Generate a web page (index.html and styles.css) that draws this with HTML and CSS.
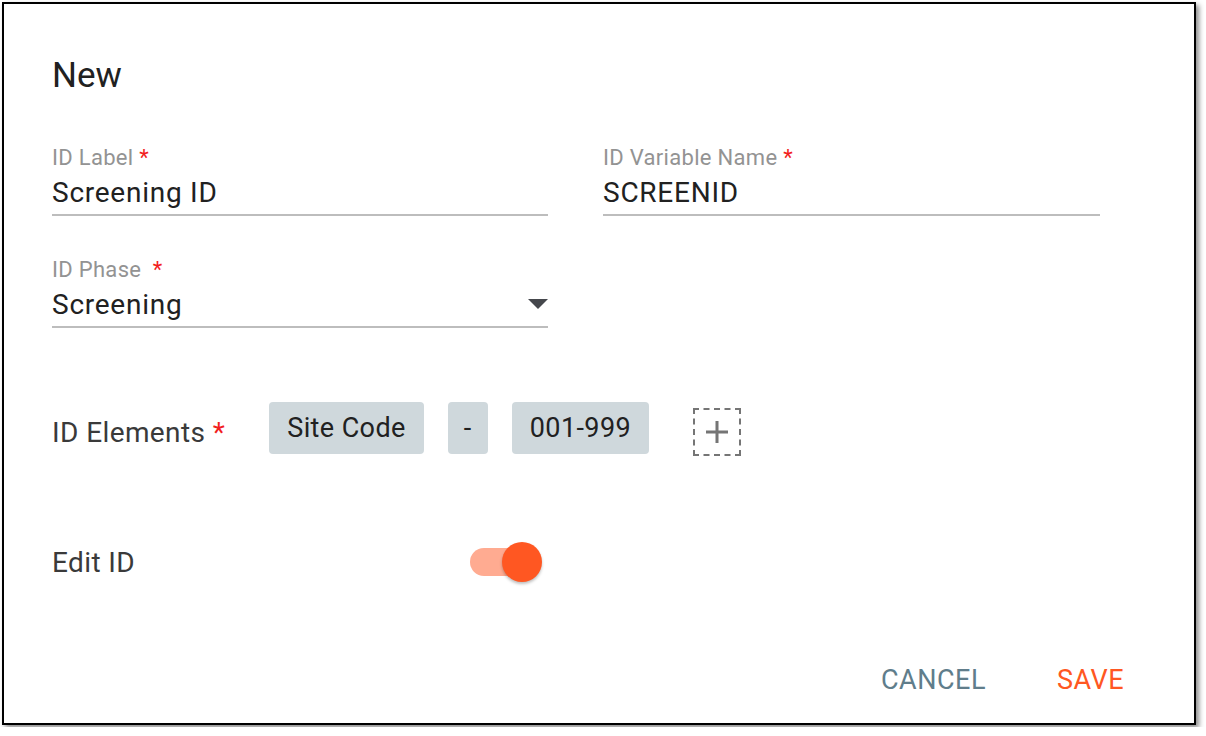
FILE: index.html
```html
<!DOCTYPE html>
<html lang="en">
<head>
    <meta charset="UTF-8">
    <meta name="viewport" content="width=device-width, initial-scale=1.0">
    <title>New ID</title>
    <link rel="stylesheet" href="styles.css">
</head>
<body>
    <div class="dialog">
        <h1 class="dialog-title">New</h1>

        <div class="fields">
            <div class="field">
                <label class="field-label">ID Label <span class="req">*</span></label>
                <div class="field-input">Screening ID</div>
            </div>
            <div class="field">
                <label class="field-label">ID Variable Name <span class="req">*</span></label>
                <div class="field-input">SCREENID</div>
            </div>
            <div class="field field-select">
                <label class="field-label">ID Phase &nbsp;<span class="req">*</span></label>
                <div class="field-input">
                    <span>Screening</span>
                    <svg class="select-arrow" width="20" height="10" viewBox="0 0 20 10">
                        <path d="M0 0 L20 0 L10 10 Z" fill="#45474c"/>
                    </svg>
                </div>
            </div>
        </div>

        <div class="elements-row">
            <div class="row-label">ID Elements <span class="req">*</span></div>
            <div class="chips">
                <span class="chip">Site Code</span>
                <span class="chip chip-narrow">-</span>
                <span class="chip">001-999</span>
                <button class="add-chip" type="button">
                    <svg width="24" height="24" viewBox="0 0 24 24">
                        <path d="M12 1 V23 M1 12 H23" stroke="#757575" stroke-width="3"/>
                    </svg>
                </button>
            </div>
        </div>

        <div class="toggle-row">
            <div class="row-label toggle-label">Edit ID</div>
            <div class="switch on">
                <span class="switch-track"></span>
                <span class="switch-thumb"></span>
            </div>
        </div>

        <div class="actions">
            <button class="btn btn-cancel" type="button">CANCEL</button>
            <button class="btn btn-save" type="button">SAVE</button>
        </div>
    </div>
</body>
</html>
```

FILE: styles.css
```css
body {
    margin: 0;
    background: #fff;
    font-family: Roboto, "Liberation Sans", Arial, sans-serif;
}

.dialog {
    box-sizing: border-box;
    width: 1194px;
    height: 723px;
    margin: 2px;
    padding: 0 70px 0 48px;
    border: 2px solid #000;
    background: #fff;
    box-shadow: 3px 3px 5px rgba(0, 0, 0, 0.45);
    overflow: hidden;
}

.dialog-title {
    margin: 52px 0 0;
    font-size: 35px;
    font-weight: 400;
    line-height: 40px;
    color: #212121;
}

/* Text fields */
.fields {
    display: grid;
    grid-template-columns: 496px 497px;
    column-gap: 55px;
    row-gap: 42px;
    margin-top: 50px;
}

.field-label {
    display: block;
    font-size: 22px;
    line-height: 24px;
    color: #939393;
    letter-spacing: 0.3px;
}

.req {
    color: #f21f1f;
}

.field-input {
    margin-top: 7px;
    padding-bottom: 5px;
    border-bottom: 2px solid #bdbdbd;
    font-size: 28px;
    line-height: 32px;
    color: #212121;
    letter-spacing: 0.75px;
}

.field-select .field-input {
    display: flex;
    justify-content: space-between;
    align-items: center;
}

.select-arrow {
    display: block;
    margin-top: -2px;
}

/* ID elements */
.elements-row {
    display: flex;
    align-items: center;
    height: 56px;
    margin-top: 76px;
}

.row-label {
    font-size: 28px;
    color: #3a3a3a;
    letter-spacing: 0.4px;
}

.chips {
    display: flex;
    align-items: center;
    gap: 24px;
    margin-left: 44px;
}

.chip {
    box-sizing: border-box;
    height: 52px;
    margin-bottom: 8px;
    padding: 0 18px;
    border-radius: 4px;
    background: #cfd8dc;
    font-size: 27px;
    line-height: 52px;
    color: #212121;
    letter-spacing: 0.4px;
}

.chip-narrow {
    width: 40px;
    padding: 0;
    text-align: center;
}

.add-chip {
    display: flex;
    align-items: center;
    justify-content: center;
    width: 48px;
    height: 48px;
    margin-left: 20px;
    padding: 0;
    border: 2px dashed #757575;
    background: none;
}

/* Switch */
.toggle-row {
    display: flex;
    align-items: center;
    height: 40px;
    margin-top: 82px;
}

.toggle-label {
    width: 418px;
}

.switch {
    position: relative;
    width: 74px;
    height: 40px;
}

.switch-track {
    position: absolute;
    left: 0;
    top: 6px;
    width: 68px;
    height: 28px;
    border-radius: 14px;
    background: #ffab91;
}

.switch-thumb {
    position: absolute;
    left: 32px;
    top: 0;
    width: 40px;
    height: 40px;
    border-radius: 50%;
    background: #ff5722;
    box-shadow: 0 2px 3px rgba(0, 0, 0, 0.25);
}

/* Actions */
.actions {
    display: flex;
    justify-content: flex-end;
    gap: 71px;
    margin-top: 80px;
}

.btn {
    padding: 0;
    border: none;
    background: none;
    font-family: inherit;
    font-size: 27px;
    line-height: 36px;
    letter-spacing: 0.5px;
}

.btn-cancel {
    color: #607d8b;
}

.btn-save {
    color: #ff5722;
}
```
